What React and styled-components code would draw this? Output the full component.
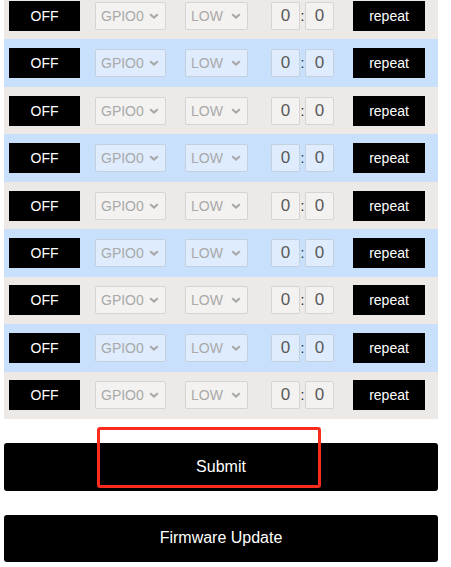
import React from 'react';
import styled, { createGlobalStyle } from 'styled-components';

const GlobalStyle = createGlobalStyle`
    html, body {
        margin:0;
        padding:0;
        background:#fff;
        font-family:"Liberation Sans", Arial, sans-serif;
        overflow:hidden;
    }
`;

const rows = Array.from({ length: 9 }, (_, i) => ({ id: i, pin: 'GPIO0', level: 'LOW', h: 0, m: 0 }));

function Chevron() {
    return (
        <svg width="10" height="6" viewBox="0 0 10 6">
            <path d="M1.2 1.2 L5 4.6 L8.8 1.2" fill="none" stroke="#a8a8a8" strokeWidth="2.1" />
        </svg>
    );
}

function App() {
    return (
        <>
            <GlobalStyle />
            <Page>
                <Schedule>
                    {rows.map((row) => (
                        <Row key={row.id} $alt={row.id % 2 === 1}>
                            <BlackButton $w={71} $ml={5}>OFF</BlackButton>
                            <FakeSelect $w={71} $ml={15}>
                                <span>{row.pin}</span>
                                <Chevron />
                            </FakeSelect>
                            <FakeSelect $w={63} $ml={19}>
                                <span>{row.level}</span>
                                <Chevron />
                            </FakeSelect>
                            <Time>
                                <NumBox>{row.h}</NumBox>
                                <Colon>:</Colon>
                                <NumBox>{row.m}</NumBox>
                            </Time>
                            <BlackButton $w={72} $ml={19}>repeat</BlackButton>
                        </Row>
                    ))}
                </Schedule>
                <Actions>
                    <WideButton>Submit</WideButton>
                    <WideButton>Firmware Update</WideButton>
                </Actions>
                <Highlight />
            </Page>
        </>
    );
}

const Page = styled.div`
    position:relative;
    margin-top:-8px;
`;
const Schedule = styled.div`
    width:434px;
    margin-left:4px;
`;
const Row = styled.div`
    display:flex;
    align-items:center;
    height:47.46px;
    background:${(p) => (p.$alt ? '#c9e0fc' : '#ece9e7')};
`;
const BlackButton = styled.div`
    width:${(p) => p.$w}px;
    height:30px;
    margin-left:${(p) => p.$ml}px;
    background:#000;
    color:#fff;
    font-size:14px;
    display:flex;
    align-items:center;
    justify-content:center;
`;
const FakeSelect = styled.div`
    box-sizing:border-box;
    width:${(p) => p.$w}px;
    height:28px;
    margin-left:${(p) => p.$ml}px;
    padding:0 6px 0 5px;
    background:rgba(255,255,255,0.4);
    border:1px solid rgba(0,0,0,0.12);
    border-radius:2px;
    color:#a9a9a9;
    font-size:14px;
    display:flex;
    align-items:center;
    justify-content:space-between;
`;
const Time = styled.div`
    display:flex;
    align-items:center;
    margin-left:23px;
`;
const NumBox = styled.div`
    box-sizing:border-box;
    width:29px;
    height:28px;
    background:rgba(255,255,255,0.4);
    border:1px solid rgba(0,0,0,0.12);
    border-radius:2px;
    color:#5a5a5a;
    font-size:17px;
    display:flex;
    align-items:center;
    justify-content:center;
`;
const Colon = styled.span`
    width:5px;
    text-align:center;
    font-size:14px;
    color:#222;
`;
const Actions = styled.div`
    display:flex;
    flex-direction:column;
    gap:24px;
    width:434px;
    margin:24px 0 0 4px;
`;
const WideButton = styled.div`
    height:47.5px;
    background:#000;
    color:#fff;
    border-radius:3px;
    font-size:16px;
    display:flex;
    align-items:center;
    justify-content:center;
`;
const Highlight = styled.div`
    position:absolute;
    left:97px;
    top:435px;
    width:218px;
    height:55px;
    border:3px solid #fb2b1e;
    border-radius:3px;
    pointer-events:none;
`;

export default App;
